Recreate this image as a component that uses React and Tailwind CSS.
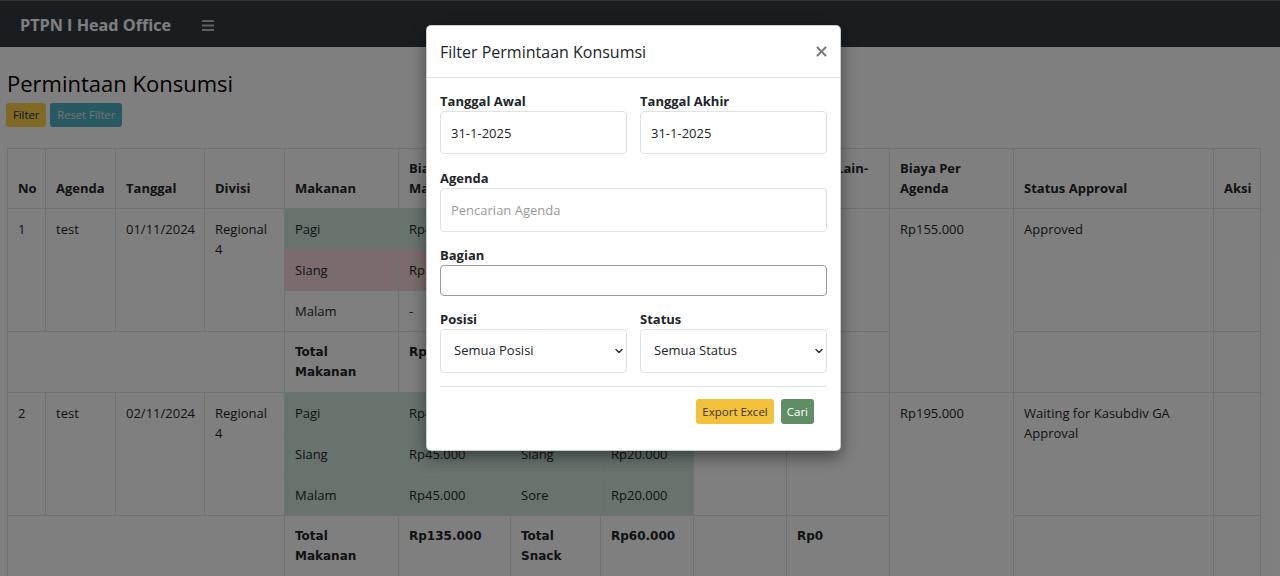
import { Fragment } from "react";

const colWidths = [38, 70, 89, 80, 114, 112, 90, 93, 93, 103, 124, 200, 47];

const headers = [
	"No",
	"Agenda",
	"Tanggal",
	"Divisi",
	"Makanan",
	"Biaya Makanan",
	"Snack",
	"Biaya Snack",
	"Lain-lain",
	"Biaya Lain-Lain",
	"Biaya Per Agenda",
	"Status Approval",
	"Aksi",
];

const agendas = [
	{
		no: 1,
		agenda: "test",
		tanggal: "01/11/2024",
		divisi: "Regional 4",
		makanan: [
			{ name: "Pagi", biaya: "Rp45.000", tone: "green" },
			{ name: "Siang", biaya: "Rp50.000", tone: "red" },
			{ name: "Malam", biaya: "-", tone: "none" },
		],
		snack: [
			{ name: "Pagi", biaya: "Rp20.000", tone: "green" },
			{ name: "Siang", biaya: "Rp20.000", tone: "green" },
			{ name: "Sore", biaya: "Rp20.000", tone: "green" },
		],
		totalMakanan: "Rp95.000",
		totalSnack: "Rp60.000",
		totalLain: "Rp0",
		perAgenda: "Rp155.000",
		status: "Approved",
	},
	{
		no: 2,
		agenda: "test",
		tanggal: "02/11/2024",
		divisi: "Regional 4",
		makanan: [
			{ name: "Pagi", biaya: "Rp45.000", tone: "green" },
			{ name: "Siang", biaya: "Rp45.000", tone: "green" },
			{ name: "Malam", biaya: "Rp45.000", tone: "green" },
		],
		snack: [
			{ name: "Pagi", biaya: "Rp20.000", tone: "green" },
			{ name: "Siang", biaya: "Rp20.000", tone: "green" },
			{ name: "Sore", biaya: "Rp20.000", tone: "green" },
		],
		totalMakanan: "Rp135.000",
		totalSnack: "Rp60.000",
		totalLain: "Rp0",
		perAgenda: "Rp195.000",
		status: "Waiting for Kasubdiv GA Approval",
	},
];

const toneBg = {
	green: "bg-[#d1e7dd]",
	red: "bg-[#f8d7da]",
	none: "bg-white",
};

// shared cell styles
const td = "border border-[#dee2e6] px-[10px] py-[10px] align-top";
const th = "border border-[#dee2e6] px-[10px] pt-[9px] pb-[10px] align-bottom text-left font-bold";
const tot = "border border-[#dee2e6] px-[10px] py-[10px] align-top font-['DejaVu_Sans',sans-serif] text-[12px] font-bold";

function Chevron() {
	return (
		<svg width="8" height="5" viewBox="0 0 8 5" className="absolute right-[4px] top-1/2 -translate-y-1/2">
			<path d="M1 1l3 3 3-3" fill="none" stroke="#333" strokeWidth="1.5" strokeLinecap="round" strokeLinejoin="round" />
		</svg>
	);
}

function FilterModal() {
	return (
		<div className="absolute left-[426px] top-[25px] w-[415px] bg-white rounded-[5px] border border-black/20 shadow-[0_6px_16px_rgba(0,0,0,0.45)] text-[#212529]">
			<div className="h-[52px] px-[13px] flex items-center justify-between border-b border-[#dee2e6]">
				<h5 className="text-[16px] leading-6 font-normal">Filter Permintaan Konsumsi</h5>
				<button className="w-[12px] h-[12px] flex items-center justify-center">
					<svg width="11" height="11" viewBox="0 0 11 11">
						<path d="M1.5 1.5l8 8M9.5 1.5l-8 8" stroke="#7a7a7a" strokeWidth="2" strokeLinecap="round" />
					</svg>
				</button>
			</div>
			<div className="p-[13px]">
				<div className="grid grid-cols-2 gap-x-[13px] mb-[14px]">
					<div>
						<label className="block text-[13px] font-bold leading-5">Tanggal Awal</label>
						<input
							defaultValue="31-1-2025"
							className="w-full h-[43px] px-[10px] text-[13px] border border-[#dee2e6] rounded-[4px] outline-none"
						/>
					</div>
					<div>
						<label className="block text-[13px] font-bold leading-5">Tanggal Akhir</label>
						<input
							defaultValue="31-1-2025"
							className="w-full h-[43px] px-[10px] text-[13px] border border-[#dee2e6] rounded-[4px] outline-none"
						/>
					</div>
				</div>
				<div className="mb-[13px]">
					<label className="block text-[13px] font-bold leading-5">Agenda</label>
					<input
						placeholder="Pencarian Agenda"
						className="w-full h-[44px] px-[10px] text-[13px] border border-[#dee2e6] rounded-[4px] outline-none placeholder:text-[#9a9a9a]"
					/>
				</div>
				<div className="mb-[13px]">
					<label className="block text-[13px] font-bold leading-5">Bagian</label>
					<input className="w-full h-[31px] px-[8px] text-[13px] border border-[#9a9a9a] rounded-[4px] outline-none" />
				</div>
				<div className="grid grid-cols-2 gap-x-[13px]">
					<div>
						<label className="block text-[13px] font-bold leading-5">Posisi</label>
						<div className="relative">
							<select className="w-full h-[44px] pl-[13px] text-[13px] bg-white border border-[#dee2e6] rounded-[4px] appearance-none outline-none">
								<option>Semua Posisi</option>
							</select>
							<Chevron />
						</div>
					</div>
					<div>
						<label className="block text-[13px] font-bold leading-5">Status</label>
						<div className="relative">
							<select className="w-full h-[44px] pl-[13px] text-[13px] bg-white border border-[#dee2e6] rounded-[4px] appearance-none outline-none">
								<option>Semua Status</option>
							</select>
							<Chevron />
						</div>
					</div>
				</div>
				<div className="mt-[13px] border-t border-[#dee2e6] px-[13px] pt-[12px] pb-[13px] flex justify-end gap-[7px]">
					<button className="h-[25px] px-[6px] rounded-[3px] bg-[#f2c23c] text-[#3b3320] text-[11.5px]">Export Excel</button>
					<button className="h-[25px] px-[6px] rounded-[3px] bg-[#5f8d66] text-white text-[11.5px]">Cari</button>
				</div>
			</div>
		</div>
	);
}

export default function App() {
	return (
		<div className="relative h-[576px] overflow-hidden bg-white font-['Open_Sans',sans-serif] text-[#212529]">
			<nav className="h-[47px] border-t border-[#666] bg-[#343a40] flex items-center pl-[20px] pt-[2px]">
				<span className="text-white text-[16.2px] font-bold">PTPN I Head Office</span>
				<svg width="12" height="11" viewBox="0 0 12 11" className="ml-[31px]">
					<rect x="0" y="0" width="12" height="2" fill="#bdbdbd" />
					<rect x="0" y="4.5" width="12" height="2" fill="#bdbdbd" />
					<rect x="0" y="9" width="12" height="2" fill="#bdbdbd" />
				</svg>
			</nav>

			<main className="pl-[6px] pt-[23px]">
				<h2 className="pl-[1px] text-[22px] leading-[26px] font-normal text-black">Permintaan Konsumsi</h2>
				<div className="mt-[7px] flex gap-[4px]">
					<button className="h-6 px-[7px] rounded-[3px] bg-[#ffd24a] text-[#212529] text-[11.2px]">Filter</button>
					<button className="h-6 px-[7px] rounded-[3px] bg-[#4fb3c4] text-[#e8e8e8] text-[11.2px]">Reset Filter</button>
				</div>

				<table className="mt-[21px] ml-[1px] table-fixed border-collapse w-[1253px] text-[13px] leading-5">
					<colgroup>
						{colWidths.map((w, i) => (
							<col key={i} style={{ width: w }} />
						))}
					</colgroup>
					<thead>
						<tr>
							{headers.map((h) => (
								<th key={h} className={th}>
									{h}
								</th>
							))}
						</tr>
					</thead>
					<tbody>
						{agendas.map((a) => (
							<Fragment key={a.no}>
								{a.makanan.map((m, i) => {
									const s = a.snack[i];
									return (
										<tr key={i}>
											{i === 0 && (
												<>
													<td rowSpan={3} className={td}>{a.no}</td>
													<td rowSpan={3} className={td}>{a.agenda}</td>
													<td rowSpan={3} className={td}>{a.tanggal}</td>
													<td rowSpan={3} className={td}>{a.divisi}</td>
												</>
											)}
											<td className={`${td} ${toneBg[m.tone]}`}>{m.name}</td>
											<td className={`${td} ${toneBg[m.tone]}`}>{m.biaya}</td>
											<td className={`${td} ${toneBg[s.tone]}`}>{s.name}</td>
											<td className={`${td} ${toneBg[s.tone]}`}>{s.biaya}</td>
											{i === 0 && (
												<>
													<td rowSpan={3} className={td}></td>
													<td rowSpan={3} className={td}></td>
													<td rowSpan={4} className={td}>{a.perAgenda}</td>
													<td rowSpan={3} className={td}>{a.status}</td>
													<td rowSpan={3} className={td}></td>
												</>
											)}
										</tr>
									);
								})}
								<tr>
									<td colSpan={4} className={td}></td>
									<td className={tot}>Total Makanan</td>
									<td className={tot}>{a.totalMakanan}</td>
									<td className={tot}>Total Snack</td>
									<td className={tot}>{a.totalSnack}</td>
									<td className={td}></td>
									<td className={tot}>{a.totalLain}</td>
									<td className={td}></td>
									<td className={td}></td>
								</tr>
							</Fragment>
						))}
					</tbody>
				</table>
			</main>

			{/* modal backdrop */}
			<div className="absolute inset-0 bg-black/50"></div>
			<FilterModal />
		</div>
	);
}
